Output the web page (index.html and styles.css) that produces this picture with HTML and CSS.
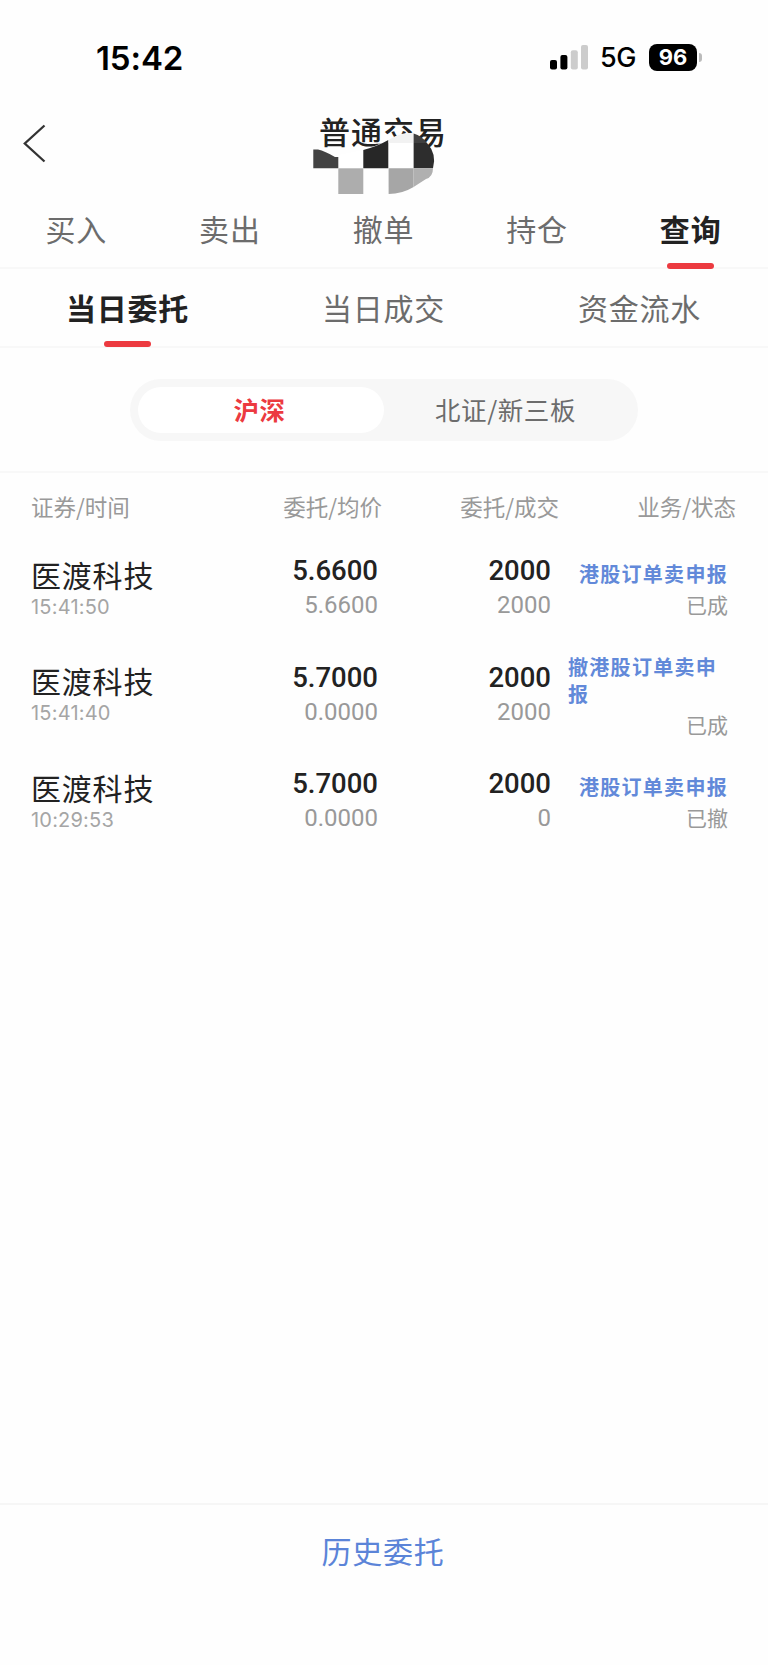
FILE: index.html
```html
<!DOCTYPE html>
<html lang="zh-CN">
<head>
    <meta charset="UTF-8">
    <meta name="viewport" content="width=device-width, initial-scale=1.0">
    <title>普通交易</title>
    <link rel="stylesheet" href="styles.css">
</head>
<body>
    <div class="page">
        <div class="status-bar">
            <div class="clock">15:42</div>
            <div class="status-right">
                <svg class="signal" width="38" height="25" viewBox="0 0 38 25">
                    <rect x="0" y="15" width="7" height="9.5" rx="2" fill="#000"/>
                    <rect x="10.4" y="10" width="7" height="14.5" rx="2" fill="#000"/>
                    <rect x="20.8" y="5.3" width="7" height="19.2" rx="2" fill="#ccc"/>
                    <rect x="31" y="0" width="7" height="24.5" rx="2" fill="#ccc"/>
                </svg>
                <span class="network">5G</span>
                <span class="battery">96</span>
                <span class="battery-tip"></span>
            </div>
        </div>

        <header class="title-bar">
            <svg class="back" width="24" height="40" viewBox="0 0 24 40">
                <path d="M21.5 1.5 L1.8 19.5 L21.5 37.5" fill="none" stroke="#333" stroke-width="2.3"/>
            </svg>
            <h1>普通交易</h1>
            <!-- mosaic over the account number -->
            <svg class="mosaic" width="130" height="66" viewBox="310 130 130 66">
                <path d="M338.3 155 L363.3 150 L376 145.5 L388.6 140 L400 134 L413.6 133 L413.6 169 L338.3 169Z" fill="#fff"/>
                <path d="M313.3 149.5 L318 149.5 Q325 151 335 157 L338.3 157 V168.3 H313.3Z" fill="#424242"/>
                <path d="M363.3 150 Q378 146 388.3 140 V168.3 H363.3Z" fill="#272727"/>
                <path d="M388.6 140 Q400 132 413.6 133 V143 H388.6Z" fill="#f2f2f2"/>
                <path d="M413.6 133.5 Q422 136 427 143 H413.6Z" fill="#404040"/>
                <path d="M413.6 143 H427 Q437 154 433 168.3 H413.6Z" fill="#2d2d2d"/>
                <path d="M338.3 168.3 H363.3 V194 H338.3Z" fill="#adadad"/>
                <path d="M388.6 168.3 H413.6 V187 Q402 194 388.6 194Z" fill="#a6a6a6"/>
                <path d="M413.6 168.3 H433 Q433 177 426 179 L413.6 187Z" fill="#b0b0b0"/>
            </svg>
        </header>

        <nav class="tabs main-tabs">
            <div class="tab">买入</div>
            <div class="tab">卖出</div>
            <div class="tab">撤单</div>
            <div class="tab">持仓</div>
            <div class="tab active">查询</div>
        </nav>
        <nav class="tabs sub-tabs">
            <div class="tab active">当日委托</div>
            <div class="tab">当日成交</div>
            <div class="tab">资金流水</div>
        </nav>

        <div class="market">
            <div class="switch">
                <div class="option selected">沪深</div>
                <div class="option">北证/新三板</div>
            </div>
        </div>

        <main class="orders">
            <div class="orders-head">
                <div>证券/时间</div>
                <div>委托/均价</div>
                <div>委托/成交</div>
                <div>业务/状态</div>
            </div>
            <div class="order">
                <div class="stock"><div class="name">医渡科技</div><div class="time">15:41:50</div></div>
                <div class="num"><div class="big">5.6600</div><div class="small">5.6600</div></div>
                <div class="num"><div class="big">2000</div><div class="small">2000</div></div>
                <div class="state"><div class="kind">港股订单卖申报</div><div class="result">已成</div></div>
            </div>
            <div class="order">
                <div class="stock"><div class="name">医渡科技</div><div class="time">15:41:40</div></div>
                <div class="num"><div class="big">5.7000</div><div class="small">0.0000</div></div>
                <div class="num"><div class="big">2000</div><div class="small">2000</div></div>
                <div class="state"><div class="kind">撤港股订单卖申报</div><div class="result">已成</div></div>
            </div>
            <div class="order">
                <div class="stock"><div class="name">医渡科技</div><div class="time">10:29:53</div></div>
                <div class="num"><div class="big">5.7000</div><div class="small">0.0000</div></div>
                <div class="num"><div class="big">2000</div><div class="small">0</div></div>
                <div class="state"><div class="kind">港股订单卖申报</div><div class="result">已撤</div></div>
            </div>
        </main>

        <footer class="history">历史委托</footer>
    </div>
</body>
</html>
```
FILE: styles.css
```css
* {
    box-sizing: border-box;
}

body {
    margin: 0;
    background-color: #fefefe;
    font-family: "Noto Sans CJK SC", sans-serif;
    color: #222;
}

.page {
    width: 768px;
    height: 1665px;
    display: flex;
    flex-direction: column;
}

/* status bar */
.status-bar {
    height: 106px;
    padding: 9px 66px 0 96px;
    display: flex;
    justify-content: space-between;
    align-items: center;
    font-family: Inter, sans-serif;
    color: #000;
}

.clock {
    font-size: 33px;
    font-weight: 600;
    letter-spacing: -0.1px;
}

.status-right {
    display: flex;
    align-items: center;
}

.network {
    margin-left: 12px;
    width: 37px;
    font-size: 27px;
    font-weight: 500;
    letter-spacing: -0.5px;
}

.battery {
    margin-left: 12px;
    width: 48px;
    height: 27px;
    border-radius: 8px;
    background-color: #000;
    color: #fff;
    font-size: 22px;
    font-weight: 700;
    line-height: 27px;
    text-align: center;
}

.battery-tip {
    margin-left: 2px;
    width: 3px;
    height: 9px;
    border-radius: 0 3px 3px 0;
    background-color: #bbb;
}

/* title */
.title-bar {
    height: 86px;
    position: relative;
    padding: 18px 25px 0 23px;
    display: grid;
    grid-template-columns: 24px 1fr 24px;
    align-items: start;
}

.title-bar h1 {
    margin: -15px 0 0;
    font-size: 31px;
    font-weight: 500;
    line-height: 44px;
    letter-spacing: 1px;
    text-align: center;
}

.mosaic {
    position: absolute;
    left: 310px;
    top: 24px;
}

/* tabs */
.tabs {
    display: flex;
    border-bottom: 2px solid #f8f8f8;
    font-size: 30px;
    letter-spacing: 0.8px;
    color: #6c6c6c;
}

.tab {
    flex: 1;
    display: flex;
    flex-direction: column;
    align-items: center;
    justify-content: center;
    position: relative;
    padding: 0 1px 3px 0;
}

.main-tabs {
    height: 77px;
}

.sub-tabs {
    height: 79px;
    padding-top: 2px;
}

.tab.active {
    color: #222;
    font-weight: 700;
}

.tab.active::after {
    content: "";
    position: absolute;
    bottom: -2px;
    width: 47px;
    height: 6px;
    border-radius: 3px;
    background-color: #ec3a40;
}

.sub-tabs .tab.active::after {
    bottom: -1px;
}

/* market switch */
.market {
    height: 125px;
    padding-top: 31px;
    display: flex;
    justify-content: center;
    align-items: flex-start;
    border-bottom: 2px solid #f8f8f8;
}

.switch {
    width: 508px;
    height: 62px;
    padding: 8px;
    display: flex;
    border-radius: 31px;
    background-color: #f7f7f7;
    font-size: 25.5px;
    letter-spacing: 0.6px;
    color: #6c6c6c;
}

.option {
    flex: 1;
    display: flex;
    align-items: center;
    justify-content: center;
    border-radius: 23px;
    padding: 0 3px 3px 0;
}

.option.selected {
    background-color: #fff;
    color: #ec3a40;
    font-weight: 700;
}

/* order list */
.orders {
    flex: 1;
}

.orders-head,
.order {
    display: grid;
    grid-template-columns: 170px 1fr 177px 177px;
    padding: 0 32px 0 31px;
}

.orders-head {
    height: 63px;
    padding-top: 16px;
    font-size: 22.5px;
    line-height: 34px;
    color: #999;
    text-align: right;
}

.orders-head div:first-child {
    text-align: left;
}

.order {
    height: 106.5px;
    padding-right: 40px;
    grid-template-columns: 170px 1fr 173px 177px;
    align-items: center;
}

.stock {
    padding-bottom: 3px;
}

.name {
    font-size: 30px;
    line-height: 38px;
    letter-spacing: 0.8px;
}

.time {
    font-family: Inter, sans-serif;
    font-size: 20px;
    line-height: 28px;
    letter-spacing: 0.2px;
    color: #a5a5a5;
}

.num {
    padding-bottom: 4px;
    font-family: Roboto, sans-serif;
    text-align: right;
}

.big {
    font-size: 27.5px;
    font-weight: 500;
    line-height: 36px;
}

.small {
    font-size: 24px;
    line-height: 32px;
    color: #999;
}

.state {
    padding: 2px 0 0 17px;
    display: flex;
    flex-direction: column;
    align-items: flex-end;
}

.kind {
    font-size: 20px;
    font-weight: 700;
    line-height: 27px;
    letter-spacing: 1.3px;
    color: #6289d9;
}

.result {
    font-size: 21px;
    line-height: 34px;
    color: #999;
}

/* bottom link */
.history {
    height: 162px;
    padding: 23px 2px 0 0;
    border-top: 2px solid #f6f6f6;
    font-size: 30px;
    line-height: 44px;
    letter-spacing: 0.8px;
    text-align: center;
    color: #5b84d8;
}
```
